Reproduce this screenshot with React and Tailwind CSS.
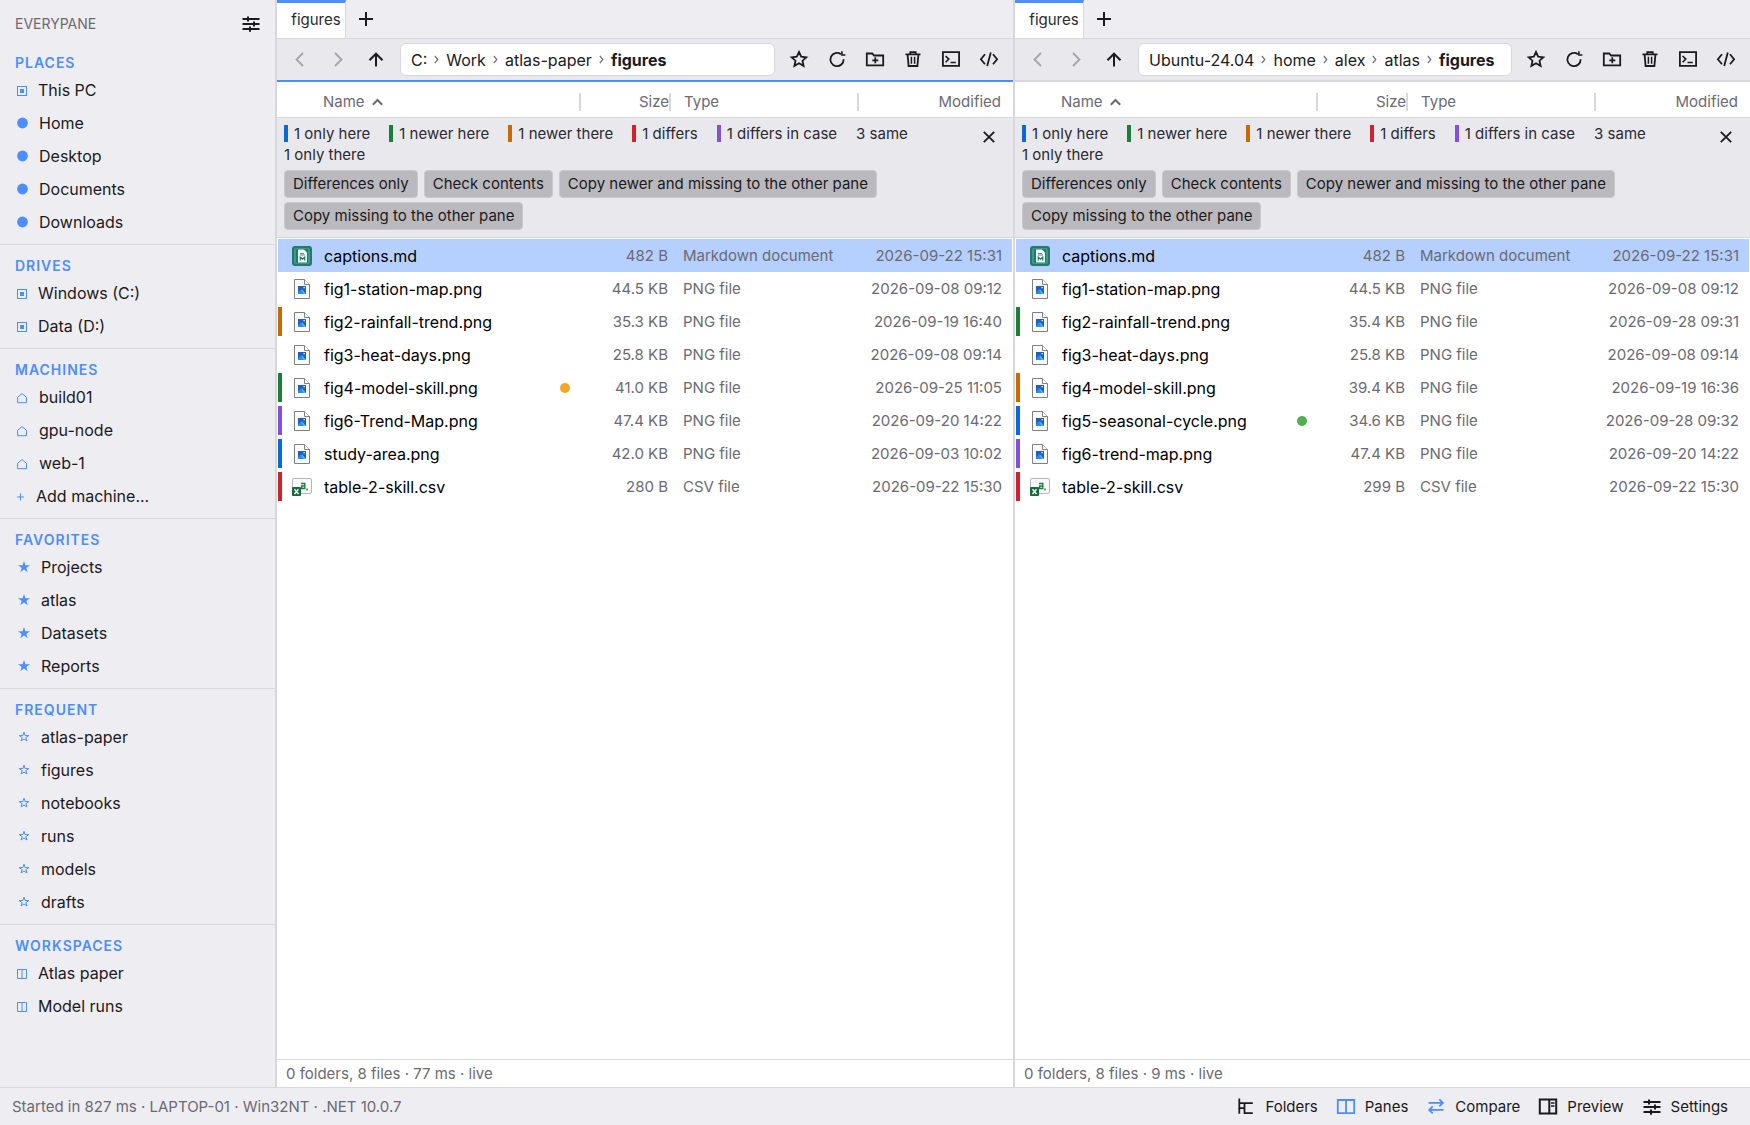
import clsx from "clsx";

const places = [
  {
    title: "Places",
    items: [
      { icon: "square", label: "This PC" },
      { icon: "dot", label: "Home" },
      { icon: "dot", label: "Desktop" },
      { icon: "dot", label: "Documents" },
      { icon: "dot", label: "Downloads" },
    ],
  },
  {
    title: "Drives",
    items: [
      { icon: "square", label: "Windows (C:)" },
      { icon: "square", label: "Data (D:)" },
    ],
  },
  {
    title: "Machines",
    items: [
      { icon: "house", label: "build01" },
      { icon: "house", label: "gpu-node" },
      { icon: "house", label: "web-1" },
      { icon: "plus", label: "Add machine..." },
    ],
  },
  {
    title: "Favorites",
    items: [
      { icon: "star", label: "Projects" },
      { icon: "star", label: "atlas" },
      { icon: "star", label: "Datasets" },
      { icon: "star", label: "Reports" },
    ],
  },
  {
    title: "Frequent",
    items: [
      { icon: "starOutline", label: "atlas-paper" },
      { icon: "starOutline", label: "figures" },
      { icon: "starOutline", label: "notebooks" },
      { icon: "starOutline", label: "runs" },
      { icon: "starOutline", label: "models" },
      { icon: "starOutline", label: "drafts" },
    ],
  },
  {
    title: "Workspaces",
    items: [
      { icon: "columns", label: "Atlas paper" },
      { icon: "columns", label: "Model runs" },
    ],
  },
];

const panes = [
  {
    id: "left",
    active: true,
    path: ["C:", "Work", "atlas-paper", "figures"],
    status: "0 folders, 8 files · 77 ms · live",
    files: [
      { name: "captions.md", size: "482 B", type: "Markdown document", modified: "2026-09-22 15:31", icon: "md", selected: true },
      { name: "fig1-station-map.png", size: "44.5 KB", type: "PNG file", modified: "2026-09-08 09:12", icon: "png" },
      { name: "fig2-rainfall-trend.png", size: "35.3 KB", type: "PNG file", modified: "2026-09-19 16:40", icon: "png", mark: "newerThere" },
      { name: "fig3-heat-days.png", size: "25.8 KB", type: "PNG file", modified: "2026-09-08 09:14", icon: "png" },
      { name: "fig4-model-skill.png", size: "41.0 KB", type: "PNG file", modified: "2026-09-25 11:05", icon: "png", mark: "newerHere", dot: "bg-[#f5a623]" },
      { name: "fig6-Trend-Map.png", size: "47.4 KB", type: "PNG file", modified: "2026-09-20 14:22", icon: "png", mark: "caseDiff" },
      { name: "study-area.png", size: "42.0 KB", type: "PNG file", modified: "2026-09-03 10:02", icon: "png", mark: "onlyHere" },
      { name: "table-2-skill.csv", size: "280 B", type: "CSV file", modified: "2026-09-22 15:30", icon: "csv", mark: "differs" },
    ],
  },
  {
    id: "right",
    active: false,
    path: ["Ubuntu-24.04", "home", "alex", "atlas", "figures"],
    status: "0 folders, 8 files · 9 ms · live",
    files: [
      { name: "captions.md", size: "482 B", type: "Markdown document", modified: "2026-09-22 15:31", icon: "md", selected: true },
      { name: "fig1-station-map.png", size: "44.5 KB", type: "PNG file", modified: "2026-09-08 09:12", icon: "png" },
      { name: "fig2-rainfall-trend.png", size: "35.4 KB", type: "PNG file", modified: "2026-09-28 09:31", icon: "png", mark: "newerHere" },
      { name: "fig3-heat-days.png", size: "25.8 KB", type: "PNG file", modified: "2026-09-08 09:14", icon: "png" },
      { name: "fig4-model-skill.png", size: "39.4 KB", type: "PNG file", modified: "2026-09-19 16:36", icon: "png", mark: "newerThere" },
      { name: "fig5-seasonal-cycle.png", size: "34.6 KB", type: "PNG file", modified: "2026-09-28 09:32", icon: "png", mark: "onlyHere", dot: "bg-[#4caf50]" },
      { name: "fig6-trend-map.png", size: "47.4 KB", type: "PNG file", modified: "2026-09-20 14:22", icon: "png", mark: "caseDiff" },
      { name: "table-2-skill.csv", size: "299 B", type: "CSV file", modified: "2026-09-22 15:30", icon: "csv", mark: "differs" },
    ],
  },
];

const markColors = {
  onlyHere: "bg-[#0969da]",
  newerHere: "bg-[#1a7f37]",
  newerThere: "bg-[#c96a00]",
  differs: "bg-[#cf222e]",
  caseDiff: "bg-[#8250df]",
};

const legend = [
  { mark: "onlyHere", label: "1 only here" },
  { mark: "newerHere", label: "1 newer here" },
  { mark: "newerThere", label: "1 newer there" },
  { mark: "differs", label: "1 differs" },
  { mark: "caseDiff", label: "1 differs in case" },
  { label: "3 same" },
  { label: "1 only there" },
];

const compareActions = [
  "Differences only",
  "Check contents",
  "Copy newer and missing to the other pane",
  "Copy missing to the other pane",
];

const STAR = "M6 0 7.4 4.3H12L8.3 6.9 9.7 11.2 6 8.6 2.3 11.2 3.7 6.9 0 4.3H4.6Z";

// Small glyphs in front of the sidebar entries
const SideGlyph = ({ name }) => {
  switch (name) {
    case "square":
      return (
        <svg width="11" height="11" viewBox="0 0 11 11" className="mr-[10px] block">
          <rect x="0.5" y="0.5" width="9" height="9" fill="none" stroke="currentColor" />
          <rect x="3" y="3" width="4" height="4" fill="currentColor" />
        </svg>
      );
    case "dot":
      return (
        <svg width="11" height="11" viewBox="0 1 11 11" className="mr-[11px] block overflow-visible">
          <circle cx="5.5" cy="5" r="5.4" fill="currentColor" />
        </svg>
      );
    case "house":
      return (
        <svg width="11" height="11" viewBox="0 0 11 11" className="mr-[11px] block">
          <path d="M0.6 9.7V4.3L5 0.6 9.5 4.3V9.7Z" fill="none" stroke="currentColor" />
        </svg>
      );
    case "plus":
      return (
        <svg width="8" height="11" viewBox="0 0 8 11" className="mr-[11px] block">
          <path d="M3.5 1.5v7M0 5h7" stroke="currentColor" />
        </svg>
      );
    case "star":
      return (
        <svg width="13" height="11" viewBox="-1 2 13 11" className="mr-[11px] block overflow-visible">
          <path d={STAR} fill="currentColor" />
        </svg>
      );
    case "starOutline":
      return (
        <svg width="13" height="11" viewBox="-1 2 13 11" className="mr-[11px] block overflow-visible">
          <path d="M6 1.2 7.1 4.6H10.8L7.8 6.7 9 10 6 8 3 10 4.2 6.7 1.2 4.6H4.9Z" fill="none" stroke="currentColor" />
        </svg>
      );
    default:
      return (
        <svg width="11" height="11" viewBox="0 0 11 11" className="mr-[10px] block">
          <path d="M0.5 0.5h9v9h-9zM5 0.5v9" fill="none" stroke="currentColor" />
        </svg>
      );
  }
};

const Svg = ({ size = 20, children }) => (
  <svg
    width={size}
    height={size}
    viewBox="0 0 20 20"
    fill="none"
    stroke="currentColor"
    strokeWidth="1.8"
    aria-hidden="true"
  >
    {children}
  </svg>
);

const BackIcon = () => (
  <Svg>
    <path d="M13 3 6.5 9.5l6.5 6.5" />
  </Svg>
);

const ForwardIcon = () => (
  <Svg>
    <path d="M7 3 13.5 9.5 7 16" />
  </Svg>
);

const UpIcon = () => (
  <Svg>
    <path d="M10 16.5V4M3.5 10.2 10 3.7l6.5 6.5" strokeWidth="2" />
  </Svg>
);

const StarIcon = () => (
  <Svg>
    <path d="M10 2 12.2 6.7 17.3 7.3 13.5 10.7 14.6 15.9 10 13.3 5.4 15.9 6.5 10.7 2.7 7.3 7.8 6.7Z" />
  </Svg>
);

const RefreshIcon = () => (
  <Svg>
    <path d="M16.6 9.2A6.6 6.6 0 1 1 13.9 4.2" />
    <path d="M14.9 1.2V5H18.4" strokeWidth="1.6" />
  </Svg>
);

const NewFolderIcon = () => (
  <Svg>
    <path d="M1.8 3.5H7.3L9 5.5H18.2V15.4H1.8Z" />
    <path d="M10.3 7.3v6M7.3 10.3h6" strokeWidth="1.7" />
  </Svg>
);

const TrashIcon = () => (
  <Svg>
    <path d="M2.5 4.4h15M7.3 4.2V2.2h5.4v2M4.6 4.7 5.6 16h8.8L15.4 4.7" />
    <path d="M8.4 6.7v7M11.6 6.7v7" strokeWidth="1.5" />
  </Svg>
);

const TerminalIcon = () => (
  <Svg>
    <path d="M1.9 2.2h16.2v13.6H1.9z" />
    <path d="M4.6 6 7.8 9.1 4.6 12.2M9.5 12.5h5.3" strokeWidth="1.6" />
  </Svg>
);

const CodeIcon = () => (
  <Svg>
    <path d="M6 4.2 1.9 9.2 6 14.2M14 4.2l4.1 5L14 14.2M11.8 2.4 8.2 16" />
  </Svg>
);

const SlidersIcon = () => (
  <Svg>
    <path d="M1.5 5h17M1.5 10h17M1.5 15h17" strokeWidth="2" />
    <path d="M7 2.4v5M13 7.5v5M9 12.5v5.2" strokeWidth="2" />
  </Svg>
);

// Tree with two branches
const FoldersIcon = () => (
  <Svg>
    <path d="M3.3 1.5v10.5M3.3 6.2H16.8M3.3 11.2H8.5M8.5 6.2v10H16.8" strokeWidth="1.8" />
    <path d="M3.3 11.2v5.5" strokeWidth="1.8" />
  </Svg>
);

const PanesIcon = () => (
  <Svg>
    <path d="M1.8 3h16.4v13.2H1.8zM10 3v13.2" />
  </Svg>
);

const CompareIcon = () => (
  <Svg>
    <path d="M2.5 5.9h14M13.3 2.4l3.5 3.5-3.5 3.5M17.5 12.9h-14M6.7 9.4l-3.5 3.5 3.5 3.5" />
  </Svg>
);

const PreviewIcon = () => (
  <Svg>
    <path d="M1.8 2.6h16.4v14H1.8zM11.3 2.6v14" strokeWidth="2" />
    <path d="M13 6h3.5M13 9h3.5" strokeWidth="1.5" />
  </Svg>
);

const FileIcon = ({ kind }) => {
  if (kind === "md") {
    return (
      <svg width="20" height="20" viewBox="0 0 20 20" aria-hidden="true">
        <rect width="20" height="20" rx="3" fill="#217a6b" />
        <rect x="2" y="2" width="16" height="16" rx="2" fill="#3b9a86" />
        <rect x="4" y="3" width="12" height="14" rx="1" fill="#217a6b" />
        <path d="M6 3.5h6l3 3v10H6z" fill="#f4fbf9" />
        <path d="M8 7.5h4M8 9h5" stroke="#217a6b" strokeWidth="0.8" />
        <path d="M8.3 14.5v-3.3l2.2 2 2.2-2v3.3" fill="none" stroke="#217a6b" strokeWidth="1.2" />
      </svg>
    );
  }
  if (kind === "csv") {
    return (
      <svg width="20" height="20" viewBox="0 0 20 20" aria-hidden="true">
        <rect x="0.5" y="1.5" width="19" height="15" rx="1.5" fill="#fafafa" stroke="#b5b5b5" />
        <path d="M9 6.5h3.8v5H9.6V9h3M15 11.5v2" fill="none" stroke="#1c7c45" strokeWidth="1.4" />
        <rect x="0" y="10" width="9" height="9" rx="1" fill="#17693b" />
        <path d="M2.5 12.2 6.5 17M6.5 12.2 2.5 17" stroke="#fff" strokeWidth="1.4" />
      </svg>
    );
  }
  return (
    <svg width="20" height="20" viewBox="0 0 20 20" aria-hidden="true">
      <path d="M2.5 0.5h10l5 5v14h-15z" fill="#fafafa" stroke="#808080" />
      <path d="M12.5 0.5v5h5" fill="#fff" stroke="#808080" />
      <rect x="6" y="7" width="8" height="8" fill="#1f5fc4" />
      <path d="M6 15 10 10.3 14 15z" fill="#43c3f5" />
      <path d="M6 15V13.3L9 10.5l2.8 4.5z" fill="#2a8de6" />
      <rect x="11.5" y="8" width="1.3" height="1.3" fill="#fff" />
    </svg>
  );
};

const Sidebar = () => (
  <nav className="w-[277px] shrink-0 border-r-2 border-[#d8d7de] bg-[#eeedf2]">
    <div className="flex h-[42px] items-center justify-between pt-[6px] pr-[14px] pl-[15px]">
      <span className="text-[14px] leading-[20px] text-[#6b6a73]">EVERYPANE</span>
      <button aria-label="Sidebar options">
        <SlidersIcon />
      </button>
    </div>
    {places.map((section) => (
      <section key={section.title} className="border-b border-[#d8d7de] pt-[10px] pb-[5px] last:border-b-0">
        <h2 className="pl-[15px] text-[14px] leading-[22px] font-semibold tracking-[1px] text-[#4c8dff] uppercase">
          {section.title}
        </h2>
        <ul>
          {section.items.map((item) => (
            <li key={item.label}>
              <a href="#" className="flex h-[33px] items-center pb-[2px] pl-[17px] text-[16px]">
                <span className="pt-1 text-[#4c8dff]">
                  <SideGlyph name={item.icon} />
                </span>
                {item.label}
              </a>
            </li>
          ))}
        </ul>
      </section>
    ))}
  </nav>
);

const ToolButton = ({ label, disabled, children }) => (
  <button
    aria-label={label}
    disabled={disabled}
    className="flex h-8 w-[38px] shrink-0 items-center justify-center disabled:text-[#a5a4aa]"
  >
    {children}
  </button>
);

const Toolbar = ({ path, active }) => (
  <div
    className={clsx(
      "flex h-[43px] items-center border-b-2 bg-[#e9e8ed] pr-[5px] pl-1",
      active ? "border-[#4c8dff]" : "border-[#d8d7de]"
    )}
  >
    <ToolButton label="Back" disabled>
      <BackIcon />
    </ToolButton>
    <ToolButton label="Forward" disabled>
      <ForwardIcon />
    </ToolButton>
    <ToolButton label="Up">
      <UpIcon />
    </ToolButton>
    <div className="mx-[5px] flex h-[33px] min-w-0 flex-1 items-center gap-[7px] rounded-md border border-[#d8d7de] bg-white pl-[10px] text-[16px] whitespace-nowrap">
      {path.map((part, index) => {
        const last = index === path.length - 1;
        return (
          <span key={part} className="flex items-center gap-[7px]">
            <a href="#" className={clsx(last && "font-bold")}>
              {part}
            </a>
            {!last && (
              <svg width="5" height="9" viewBox="0 0 5 9" fill="none" stroke="#6b6a73" aria-hidden="true">
                <path d="M0.8 0.8 3.8 4.5 0.8 8.2" strokeWidth="1.2" />
              </svg>
            )}
          </span>
        );
      })}
    </div>
    <ToolButton label="Add to favorites">
      <StarIcon />
    </ToolButton>
    <ToolButton label="Refresh">
      <RefreshIcon />
    </ToolButton>
    <ToolButton label="New folder">
      <NewFolderIcon />
    </ToolButton>
    <ToolButton label="Delete">
      <TrashIcon />
    </ToolButton>
    <ToolButton label="Open terminal">
      <TerminalIcon />
    </ToolButton>
    <ToolButton label="Open in editor">
      <CodeIcon />
    </ToolButton>
  </div>
);

const ComparePanel = () => (
  <div className="flex h-[120px] items-start justify-between border-b border-[#d8d7de] bg-[#e9e8ed] pt-[5px] pr-[14px] pl-[7px]">
    <div className="flex-1">
      <ul className="flex flex-wrap gap-x-[19px] text-[15px] leading-[21px] text-[#2b2a30]">
        {legend.map((item) => (
          <li key={item.label} className="flex items-center gap-[6px]">
            {item.mark && <span className={clsx("h-[17px] w-1", markColors[item.mark])} />}
            {item.label}
          </li>
        ))}
      </ul>
      <div className="mt-[5px] flex flex-wrap gap-x-[6px] gap-y-1">
        {compareActions.map((action) => (
          <button
            key={action}
            className="h-7 rounded border border-[#c9c8cd] bg-[#bab9be] px-2 text-[15px] leading-[26px]"
          >
            {action}
          </button>
        ))}
      </div>
    </div>
    <button aria-label="Close comparison" className="mt-1 flex size-5 items-center justify-center">
      <svg width="12" height="12" viewBox="0 0 12 12" fill="none" stroke="currentColor" strokeWidth="1.8">
        <path d="M0.8 0.8 11.2 11.2M11.2 0.8 0.8 11.2" />
      </svg>
    </button>
  </div>
);

const FileRow = ({ file }) => (
  <tr className={clsx("h-[33px]", file.selected && "bg-[#b5d0ff]")}>
    <td className="border-l border-white p-0">
      <div className="flex items-center">
        <span className={clsx("h-[29px] w-1", file.mark && markColors[file.mark])} />
        <span className="mr-3 ml-[10px]">
          <FileIcon kind={file.icon} />
        </span>
        <span className="text-[16px] text-black">{file.name}</span>
        {file.dot && <span className={clsx("mr-[11px] ml-auto size-[10px] rounded-full", file.dot)} />}
      </div>
    </td>
    <td className="p-0 pt-px pr-[3px] text-right leading-[22px]">{file.size}</td>
    <td className="p-0 pt-px pl-3 leading-[22px]">{file.type}</td>
    <td className="border-r border-white p-0 pt-px pr-[10px] text-right leading-[22px]">{file.modified}</td>
  </tr>
);

const Pane = ({ pane }) => (
  <section className={clsx("flex min-w-0 flex-1 flex-col bg-white", pane.id === "left" && "basis-px")}>
    <div className="flex h-[39px] border-b border-[#d8d7de] bg-[#eeedf2]">
      <button className="w-[69px] border-t-3 border-r border-t-[#4c8dff] border-r-[#d8d7de] bg-white pl-[10px] text-[15px] text-[#2b2a30]">
        figures
      </button>
      <button aria-label="New tab" className="flex w-10 items-center justify-center">
        <svg width="14" height="14" viewBox="0 0 14 14" fill="none" stroke="currentColor" strokeWidth="2">
          <path d="M7 0v14M0 7h14" />
        </svg>
      </button>
    </div>
    <Toolbar path={pane.path} active={pane.active} />
    <div className="flex-1">
      <table className="w-full table-fixed border-separate border-spacing-0 text-[15px] text-[#6b6a73]">
        <colgroup>
          <col />
          <col className="w-[90px]" />
          <col className="w-[188px]" />
          <col className="w-[154px]" />
        </colgroup>
        <thead>
          <tr className="h-[36px] leading-[18px]">
            <th className="border-b border-[#d8d7de] p-0 pt-[5px] font-normal">
              <div className="flex h-[18px] items-center gap-[7px] border-r-2 border-[#d8d7de] pl-[46px]">
                Name
                <svg width="11" height="8" viewBox="0 0 11 8" fill="none" stroke="currentColor" strokeWidth="2">
                  <path d="M0.8 6.8 5.5 2 10.2 6.8" />
                </svg>
              </div>
            </th>
            <th className="border-b border-[#d8d7de] p-0 pt-[5px] font-normal">
              <div className="flex h-[18px] items-center justify-end border-r-2 border-[#d8d7de]">Size</div>
            </th>
            <th className="border-b border-[#d8d7de] p-0 pt-[5px] font-normal">
              <div className="flex h-[18px] items-center border-r-2 border-[#d8d7de] pl-[13px]">Type</div>
            </th>
            <th className="border-b border-[#d8d7de] p-0 pt-[5px] pr-3 text-right font-normal">Modified</th>
          </tr>
        </thead>
        <tbody>
          <tr>
            <td colSpan={4} className="border-b border-white p-0 text-[#1b1a20]">
              <ComparePanel />
            </td>
          </tr>
          {pane.files.map((file) => (
            <FileRow key={file.name} file={file} />
          ))}
        </tbody>
      </table>
    </div>
    <div className="h-7 border-t border-[#d8d7de] pl-[9px] text-[15px] leading-[28px] text-[#6b6a73]">
      {pane.status}
    </div>
  </section>
);

const StatusBar = () => (
  <footer className="flex h-[38px] shrink-0 items-center border-t border-[#d8d7de] bg-[#eeedf2] pt-px pr-[22px] pl-3">
    <span className="flex-1 text-[15px] text-[#6b6a73]">Started in 827 ms · LAPTOP-01 · Win32NT · .NET 10.0.7</span>
    <div className="flex gap-[18px] text-[15px]">
      <button className="flex items-center gap-[9px]">
        <FoldersIcon />
        Folders
      </button>
      <button className="flex items-center gap-[9px]">
        <span className="text-[#4c8dff]">
          <PanesIcon />
        </span>
        Panes
      </button>
      <button className="flex items-center gap-[9px]">
        <span className="text-[#4c8dff]">
          <CompareIcon />
        </span>
        Compare
      </button>
      <button className="flex items-center gap-[9px]">
        <PreviewIcon />
        Preview
      </button>
      <button className="flex items-center gap-[9px]">
        <SlidersIcon />
        Settings
      </button>
    </div>
  </footer>
);

const App = () => {
  return (
    <div className="flex min-h-screen flex-col bg-[#eeedf2] font-['Inter',sans-serif] text-[#1b1a20]">
      <div className="flex flex-1">
        <Sidebar />
        <main className="flex min-w-0 flex-1">
          <Pane pane={panes[0]} />
          <div className="w-[2px] bg-[#d8d7de]" />
          <Pane pane={panes[1]} />
        </main>
      </div>
      <StatusBar />
    </div>
  );
};

export default App;
